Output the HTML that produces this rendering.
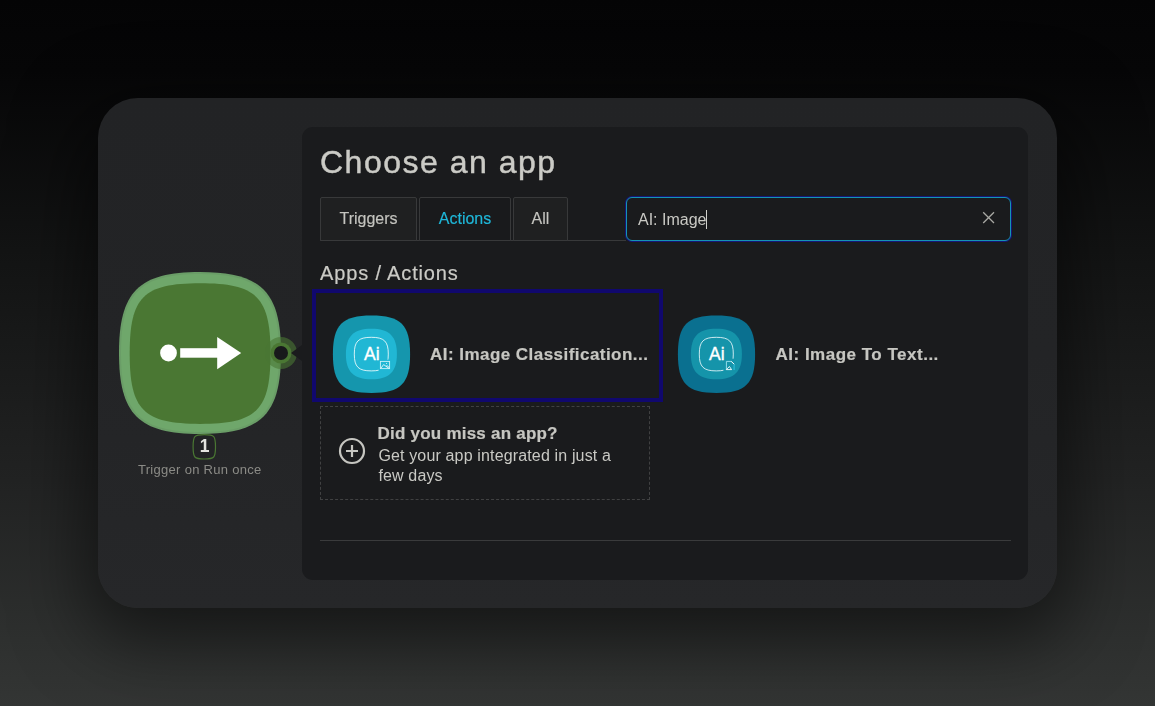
<!DOCTYPE html>
<html lang="en"><head><meta charset="utf-8"><title>Choose an app</title>
<style>
*{box-sizing:border-box;margin:0;padding:0}
html,body{width:1155px;height:706px;overflow:hidden}
body{position:relative;font-family:"Liberation Sans",sans-serif;color:#c9c9c4;
 background:linear-gradient(180deg,#040405 0px,#060607 70px,#131414 250px,#222323 480px,#2e302f 640px,#333534 706px);}
.card{position:absolute;left:98px;top:98px;width:959px;height:510px;border-radius:40px;background:linear-gradient(180deg,#222325 0%,#232426 50%,#262729 100%);
 box-shadow:0 20px 70px 14px rgba(0,0,0,.5);}
.panel{position:absolute;left:302px;top:127px;width:726px;height:453px;border-radius:11px;background:#1a1b1d}
.ptr{position:absolute;left:291px;top:345px;width:0;height:0;border-top:8px solid transparent;border-bottom:8px solid transparent;border-right:11px solid #1a1b1d}
.abs{position:absolute;white-space:nowrap}
.txt{position:absolute;left:0;top:0;width:1155px;height:706px;will-change:transform}
h1{position:absolute;left:320px;top:139.5px;font-size:32px;font-weight:400;line-height:44px;white-space:nowrap;color:#cbcbc6;letter-spacing:1.5px;-webkit-text-stroke:.45px #cbcbc6}
.tabs{position:absolute;left:320px;top:197px;width:306px;height:44px;border-bottom:1px solid #38393a}
.tab{position:absolute;top:0;height:44px;border:1px solid #38393a;border-radius:2px 2px 0 0;background:#1f2021;font-size:16px;line-height:42px;text-align:center;color:#c4c4bf;-webkit-text-stroke:.15px currentColor}
.tab.on{background:#191a1c;color:#1fb8da}
.search{position:absolute;left:626px;top:197px;width:385px;height:44px;border:1px solid #1593b4;border-radius:6px;background:#1a1b1d;box-shadow:0 0 0 1px rgba(22,22,150,.75)}
.search span{position:absolute;left:11px;top:1px;line-height:42px;font-size:16px;color:#c9c9c4}
.caret{position:absolute;left:79px;top:12px;width:1px;height:19px;background:#d0d0cc}
h2{position:absolute;left:320px;top:259px;font-size:20px;font-weight:400;line-height:28px;white-space:nowrap;color:#cbcbc6;letter-spacing:.85px;-webkit-text-stroke:.2px #cbcbc6}
.sel{position:absolute;left:312px;top:289px;width:351px;height:113px;border:4px solid #10086e;background:#1a1b1d}
.t{position:absolute;font-size:17px;font-weight:700;line-height:24px;white-space:nowrap;color:#c6c6c1;-webkit-text-stroke:.2px #c6c6c1}
.miss{position:absolute;left:320px;top:406px;width:330px;height:94px;border:1px dashed #404142}
.hr{position:absolute;left:320px;top:540px;width:691px;height:1px;background:#3a3b3c}
svg{position:absolute;left:0;top:0}
</style></head><body>
<div class="card"></div>
<div class="panel"></div>
<div class="sel"></div>

<svg width="1155" height="706" viewBox="0 0 1155 706">
 <!-- green module -->
 <path d="M200.00,272.00 C261.32,272.00 281.00,291.68 281.00,353.00 C281.00,414.32 261.32,434.00 200.00,434.00 C138.68,434.00 119.00,414.32 119.00,353.00 C119.00,291.68 138.68,272.00 200.00,272.00Z" fill="#6a9d67"/>
 <path d="M200.00,274.00 C260.04,274.00 279.00,292.96 279.00,353.00 C279.00,413.04 260.04,432.00 200.00,432.00 C139.96,432.00 121.00,413.04 121.00,353.00 C121.00,292.96 139.96,274.00 200.00,274.00Z" fill="#6fa76b"/>
 <path d="M200.10,283.30 C256.77,283.30 270.50,297.01 270.50,353.60 C270.50,410.19 256.77,423.90 200.10,423.90 C143.43,423.90 129.70,410.19 129.70,353.60 C129.70,297.01 143.43,283.30 200.10,283.30Z" fill="#4a7733"/>
 <circle cx="168.5" cy="353" r="8.4" fill="#fff"/>
 <rect x="180.2" y="348.2" width="38" height="9.5" fill="#fff"/>
 <path d="M217.2,337 L241.2,353 L217.2,369.2Z" fill="#fff"/>
 <!-- connector -->
 <circle cx="281" cy="353" r="16" fill="#4a7733" fill-opacity=".6"/>
 <circle cx="281" cy="353" r="10.5" fill="#4a7733"/>
 <circle cx="281" cy="353" r="7" fill="#18191b"/>
 <!-- badge -->
 <path d="M204.30,434.60 C214.38,434.60 215.50,435.82 215.50,446.80 C215.50,457.78 214.38,459.00 204.30,459.00 C194.22,459.00 193.10,457.78 193.10,446.80 C193.10,435.82 194.22,434.60 204.30,434.60Z" fill="#222325" stroke="#4a7733" stroke-width="1.2"/>
 <!-- icon 1 -->
 <path d="M371.50,315.60 C400.72,315.60 410.10,325.00 410.10,354.30 C410.10,383.60 400.72,393.00 371.50,393.00 C342.28,393.00 332.90,383.60 332.90,354.30 C332.90,325.00 342.28,315.60 371.50,315.60Z" fill="#1596ad"/>
 <path d="M371.40,328.70 C389.25,328.70 396.90,336.29 396.90,354.00 C396.90,371.71 389.25,379.30 371.40,379.30 C353.55,379.30 345.90,371.71 345.90,354.00 C345.90,336.29 353.55,328.70 371.40,328.70Z" fill="#21b7d4"/>
 <path d="M371.30,337.30 C384.22,337.30 388.30,341.33 388.30,354.10 C388.30,366.87 384.22,370.90 371.30,370.90 C358.38,370.90 354.30,366.87 354.30,354.10 C354.30,341.33 358.38,337.30 371.30,337.30Z" fill="none" stroke="#e8f8fb" stroke-width=".9"/>
 <rect x="378.6" y="359.6" width="12.6" height="11.4" fill="#21b7d4"/>
 <rect x="380.4" y="361.4" width="9.2" height="7.2" fill="none" stroke="#c9f1f8" stroke-width=".9"/>
 <path d="M380.8,368.3 L383.6,364.6 L388.8,368.3 M386,366.5 L387.1,365.6 L389.3,367.6" fill="none" stroke="#fff" stroke-width=".8"/>
 <circle cx="386.6" cy="363.5" r=".55" fill="#e8f8fb"/>
 <text x="371.9" y="360.3" font-family="Liberation Sans, sans-serif" font-size="17.5" fill="#fff" stroke="#fff" stroke-width=".35" text-anchor="middle">Ai</text>
 <!-- icon 2 -->
 <path d="M716.50,315.60 C745.72,315.60 755.10,325.00 755.10,354.30 C755.10,383.60 745.72,393.00 716.50,393.00 C687.28,393.00 677.90,383.60 677.90,354.30 C677.90,325.00 687.28,315.60 716.50,315.60Z" fill="#0a7090"/>
 <path d="M716.40,328.70 C734.25,328.70 741.90,336.29 741.90,354.00 C741.90,371.71 734.25,379.30 716.40,379.30 C698.55,379.30 690.90,371.71 690.90,354.00 C690.90,336.29 698.55,328.70 716.40,328.70Z" fill="#1594aa"/>
 <path d="M716.30,337.30 C729.22,337.30 733.30,341.33 733.30,354.10 C733.30,366.87 729.22,370.90 716.30,370.90 C703.38,370.90 699.30,366.87 699.30,354.10 C699.30,341.33 703.38,337.30 716.30,337.30Z" fill="none" stroke="#dff3f7" stroke-width=".9"/>
 <rect x="723.4" y="358.8" width="12.6" height="12.6" fill="#1594aa"/>
 <path d="M726.4,369.6 V361.4 H731.4" fill="none" stroke="#9fe3f0" stroke-width=".9"/>
 <path d="M731.2,361.4 L734.3,364.3" fill="none" stroke="#fff" stroke-width="1"/>
 <path d="M734.1,364.4 V369.9" fill="none" stroke="#2bc0dc" stroke-width="1.1"/>
 <path d="M726.3,369.6 L729.4,366.5 L731.6,369.6Z" fill="none" stroke="#fff" stroke-width=".9"/>
 <text x="716.9" y="360.3" font-family="Liberation Sans, sans-serif" font-size="17.5" fill="#fff" stroke="#fff" stroke-width=".35" text-anchor="middle">Ai</text>
 <!-- plus icon -->
 <circle cx="352" cy="451" r="12" fill="none" stroke="#c6c6c1" stroke-width="2.2"/>
 <path d="M346,451 H358 M352,445 V457" stroke="#c6c6c1" stroke-width="2.2" fill="none"/>
</svg>
<div class="ptr"></div>

<div class="txt">
<div class="abs" style="left:193px;top:436px;width:23px;text-align:center;font-size:17.5px;font-weight:700;line-height:20px;color:#e4e4e0">1</div>
<div class="abs" style="left:138px;top:462px;font-size:13px;line-height:16px;color:#8b8b86;letter-spacing:.29px">Trigger on Run once</div>

<h1>Choose an app</h1>
<div class="tabs">
 <div class="tab" style="left:0;width:97px">Triggers</div>
 <div class="tab on" style="left:99px;width:92px">Actions</div>
 <div class="tab" style="left:193px;width:55px">All</div>
</div>
<div class="search"><span>AI: Image</span><i class="caret"></i>
 <svg width="13" height="13" viewBox="0 0 13 13" style="left:355px;top:13px"><path d="M1.2,1.2 L12,12 M12,1.2 L1.2,12" stroke="#a8a8a3" stroke-width="1.3" fill="none"/></svg>
</div>
<h2>Apps / Actions</h2>
<div class="t" style="left:430px;top:343px;letter-spacing:.46px">AI: Image Classification...</div>
<div class="t" style="left:775.5px;top:343px;letter-spacing:.5px">AI: Image To Text...</div>
<div class="miss"></div>
<div class="t" style="left:377.6px;top:421.6px;letter-spacing:.22px">Did you miss an app?</div>
<div class="abs" style="left:378.4px;top:446px;font-size:16px;line-height:19.5px;color:#c9c9c4;white-space:normal;width:260px;letter-spacing:.15px">Get your app integrated in just a<br>few days</div>
<div class="hr"></div>
</div>
</body></html>
